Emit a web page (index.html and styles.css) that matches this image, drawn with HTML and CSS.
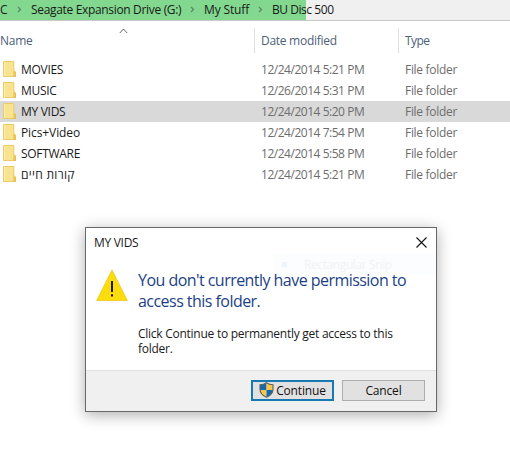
FILE: index.html
```html
<!DOCTYPE html>
<html lang="en">

<head>
    <meta charset="UTF-8">
    <title>BU Disc 500</title>
    <link rel="stylesheet" href="styles.css">
</head>

<body>
    <!-- Shared icons -->
    <svg class="symbols" width="0" height="0">
        <symbol id="folder" viewBox="0 0 13 16">
            <path d="M.5.5h10.3v8.8l1.7 1.5v4.7H.5z" fill="#fae38f" stroke="#e9cb68"/>
            <path d="M1 1h1v14H1z" fill="#fff0b2"/>
            <path d="M10.8 15.5v-5l1.7 1v4z" fill="#f4d265" stroke="#dfb94d" stroke-width=".7"/>
        </symbol>
        <symbol id="chevron" viewBox="0 0 5 7">
            <path d="M1 1l2.5 2.5L1 6" fill="none" stroke="currentColor" stroke-width="1.3"/>
        </symbol>
    </svg>

    <nav class="address">
        <span class="crumb crumb-c">C</span>
        <svg class="sep"><use href="#chevron"/></svg>
        <span class="crumb crumb-drive">Seagate Expansion Drive (G:)</span>
        <svg class="sep"><use href="#chevron"/></svg>
        <span class="crumb crumb-stuff">My Stuff</span>
        <svg class="sep"><use href="#chevron"/></svg>
        <span class="crumb crumb-disc">BU Disc 500</span>
    </nav>

    <div class="columns">
        <div class="col-name">Name
            <svg class="sort" viewBox="0 0 9 6"><path d="M.8 5l3.7-4 3.7 4" fill="none" stroke="#666"/></svg>
        </div>
        <div class="col-date">Date modified</div>
        <div class="col-type">Type</div>
    </div>

    <!-- File list -->
    <div class="files">
        <div class="row">
            <svg class="folder"><use href="#folder"/></svg>
            <span class="name">MOVIES</span><span class="date">12/24/2014 5:21 PM</span><span class="type">File folder</span>
        </div>
        <div class="row">
            <svg class="folder"><use href="#folder"/></svg>
            <span class="name">MUSIC</span><span class="date">12/26/2014 5:31 PM</span><span class="type">File folder</span>
        </div>
        <div class="row selected">
            <svg class="folder"><use href="#folder"/></svg>
            <span class="name">MY VIDS</span><span class="date">12/24/2014 5:20 PM</span><span class="type">File folder</span>
        </div>
        <div class="row">
            <svg class="folder"><use href="#folder"/></svg>
            <span class="name mixed">Pics+Video</span><span class="date">12/24/2014 7:54 PM</span><span class="type">File folder</span>
        </div>
        <div class="row">
            <svg class="folder"><use href="#folder"/></svg>
            <span class="name">SOFTWARE</span><span class="date">12/24/2014 5:58 PM</span><span class="type">File folder</span>
        </div>
        <div class="row">
            <svg class="folder"><use href="#folder"/></svg>
            <span class="name hebrew" lang="he">קורות חיים</span><span class="date">12/24/2014 5:21 PM</span><span class="type">File folder</span>
        </div>
    </div>

    <!-- Permission dialog -->
    <div class="dialog">
        <div class="titlebar">
            <span>MY VIDS</span>
            <svg class="close" viewBox="0 0 11 11"><path d="M.5.5l10 10M10.5.5l-10 10" stroke="#111" stroke-width="1.1"/></svg>
        </div>
        <div class="ghost">
            <span class="ghost-icon"></span>
            <span>Rectangular Snip</span>
        </div>
        <div class="content">
            <svg class="warning" viewBox="0 0 32 32">
                <path d="M16 1L31.3 31.5H.7z" fill="#fddc0b" stroke="#edc719" stroke-width=".8" stroke-linejoin="round"/>
                <path d="M15 12h2v11h-2zM15 25.3h2v2.2h-2z" fill="#1c1a05"/>
            </svg>
            <div class="message">
                <div class="heading">You don't currently have permission to<br>access this folder.</div>
                <div class="detail">Click Continue to permanently get access to this<br>folder.</div>
            </div>
        </div>
        <div class="footer">
            <button class="btn primary">
                <svg class="shield" viewBox="0 0 15 16">
                    <path d="M7.5 1Q5 2.8 1 2.8V8h6.500z" fill="#1769ae"/>
                    <path d="M7.5 1Q10 2.8 14 2.8V8H7.500z" fill="#f9c74e"/>
                    <path d="M1 8h6.500v7Q1.600 13 1 8z" fill="#f9c74e"/>
                    <path d="M7.500 8H14q-.6 5-6.500 7z" fill="#1769ae"/>
                    <path d="M7.5.8Q5 2.8 1 2.8V7q0 5.500 6.500 8.300Q14 12.500 14 7V2.800Q10 2.800 7.500.8z" fill="none" stroke="#59605f" stroke-width="1.1"/>
                </svg>
                <span>Continue</span>
            </button>
            <button class="btn"><span>Cancel</span></button>
        </div>
    </div>
</body>

</html>
```

FILE: styles.css
```css
* {
    box-sizing: border-box;
}

body {
    margin: 0;
    height: 457px;
    overflow: hidden;
    background: #fff;
    color: #1a1a1a;
    font-family: "Open Sans", "Noto Sans", "DejaVu Sans", sans-serif;
    font-size: 12px;
    white-space: nowrap;
}

svg {
    display: block;
    flex: none;
}

.symbols {
    position: absolute;
}

/* Address bar with the loading progress behind it */
.address {
    display: flex;
    align-items: center;
    height: 21px;
    padding-bottom: 1px;
    border-bottom: 1px solid #c8c8c8;
    background: linear-gradient(to right, #82d88e 306px, #f0f0f0 306px);
}

.crumb {
    flex: none;
    letter-spacing: -0.33px;
}

.crumb-c {
    width: 17px;
}

.crumb-drive {
    width: 159px;
}

.crumb-stuff {
    width: 54px;
    letter-spacing: -0.15px;
}

.crumb-disc {
    letter-spacing: -0.45px;
}

.sep {
    width: 5px;
    height: 7px;
    margin-right: 9px;
    color: #60866a;
}

.columns {
    display: flex;
    height: 38px;
    padding-top: 7px;
    color: #4c607a;
    line-height: 25px;
    letter-spacing: -0.28px;
}

.columns > div {
    height: 25px;
}

.col-name {
    display: flex;
    width: 255px;
    border-right: 1px solid #e0e0e0;
}

.sort {
    width: 9px;
    height: 6px;
    margin-left: 87px;
}

.col-date {
    width: 144px;
    padding-left: 6px;
    border-right: 1px solid #e0e0e0;
}

.col-type {
    padding-left: 6px;
    letter-spacing: -0.6px;
}

.row {
    display: flex;
    align-items: center;
    height: 21px;
    padding-left: 3px;
    letter-spacing: -0.3px;
}

.selected {
    background: #d9d9d9;
}

.folder {
    width: 13px;
    height: 16px;
    margin: 0 5px 1px 0;
}

.name {
    width: 240px;
}

.mixed {
    letter-spacing: -0.1px;
}

.hebrew {
    letter-spacing: 0.3px;
}

.date {
    width: 144px;
    color: #6d6d6d;
    letter-spacing: -0.47px;
}

.type {
    color: #6d6d6d;
}

.dialog {
    position: absolute;
    left: 85px;
    top: 227px;
    display: flex;
    flex-direction: column;
    width: 352px;
    height: 185px;
    border: 1px solid #686868;
    background: #fff;
    box-shadow: 0 3px 14px rgba(0, 0, 0, 0.32);
}

.titlebar {
    display: flex;
    justify-content: space-between;
    align-items: center;
    height: 29px;
    padding: 0 9px 0 8px;
    letter-spacing: -0.3px;
}

.close {
    width: 11px;
    height: 11px;
}

/* Menu item fading out over the dialog */
.ghost {
    position: absolute;
    left: 187px;
    top: 26px;
    display: flex;
    align-items: center;
    width: 163px;
    height: 21px;
    padding-left: 9px;
    background: #fcfdfe;
    color: #f0f3f6;
    line-height: 15px;
    letter-spacing: -0.4px;
}

.ghost-icon {
    width: 5px;
    height: 5px;
    margin-right: 17px;
    background: #edf5fb;
}

.content {
    display: flex;
    flex: 1;
    padding: 12px 0 0 10px;
    position: relative;
}

.warning {
    width: 32px;
    height: 32px;
    margin: 0 10px 0 0;
}

.heading {
    margin-top: 1px;
    color: #1c3f86;
    font-size: 16px;
    line-height: 21px;
    letter-spacing: -0.54px;
}

.detail {
    margin-top: 14px;
    line-height: 15px;
    letter-spacing: -0.26px;
}

.footer {
    display: flex;
    gap: 8px;
    justify-content: flex-end;
    height: 41px;
    padding: 9px 11px 0 0;
    border-top: 1px solid #dfdfdf;
    background: #f0f0f0;
}

.btn {
    display: flex;
    align-items: center;
    justify-content: center;
    width: 83px;
    height: 21px;
    padding: 0;
    border: 1px solid #adadad;
    background: #e1e1e1;
    color: #111;
    font: inherit;
    letter-spacing: -0.15px;
}

.primary {
    border: 2px solid #1878b4;
}

.shield {
    width: 15px;
    height: 16px;
    margin: 0 2px 1px 0;
}
```
